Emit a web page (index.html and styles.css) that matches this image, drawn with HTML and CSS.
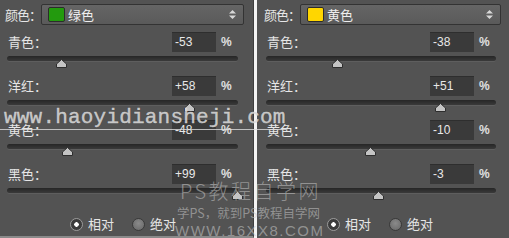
FILE: index.html
```html
<!DOCTYPE html>
<html lang="zh">
<head>
<meta charset="utf-8">
<link rel="stylesheet" href="styles.css">
</head>
<body>
<div class="wrap">
  <section class="panel panel-left">
    <div class="color-row">
      <span class="color-label">颜色：</span>
      <div class="select">
        <span class="swatch swatch-green"></span>
        <span class="select-text">绿色</span>
        <svg class="updown" width="7" height="9" viewBox="0 0 7 9"><path d="M3.5 0 L7 3.5 H0 Z M3.5 9 L7 5.5 H0 Z" fill="#d8d8d8"/></svg>
      </div>
    </div>
    <div class="group">
      <div class="head"><span class="lbl">青色：</span><span class="num">-53</span><span class="pct">%</span></div>
      <div class="track"><svg class="thumb" style="left:23.5%" width="11" height="9" viewBox="0 0 11 9"><path d="M0.5 8.5 V5 L5.5 0.5 L10.5 5 V8.5 Z" fill="#c4c4c4" stroke="#2e2e2e"/></svg></div>
    </div>
    <div class="group">
      <div class="head"><span class="lbl">洋红：</span><span class="num">+58</span><span class="pct">%</span></div>
      <div class="track"><svg class="thumb" style="left:79%" width="11" height="9" viewBox="0 0 11 9"><path d="M0.5 8.5 V5 L5.5 0.5 L10.5 5 V8.5 Z" fill="#c4c4c4" stroke="#2e2e2e"/></svg></div>
    </div>
    <div class="group">
      <div class="head"><span class="lbl">黄色：</span><span class="num">-48</span><span class="pct">%</span></div>
      <div class="track"><svg class="thumb" style="left:26%" width="11" height="9" viewBox="0 0 11 9"><path d="M0.5 8.5 V5 L5.5 0.5 L10.5 5 V8.5 Z" fill="#c4c4c4" stroke="#2e2e2e"/></svg></div>
    </div>
    <div class="group">
      <div class="head"><span class="lbl">黑色：</span><span class="num">+99</span><span class="pct">%</span></div>
      <div class="track"><svg class="thumb" style="left:99.5%" width="11" height="9" viewBox="0 0 11 9"><path d="M0.5 8.5 V5 L5.5 0.5 L10.5 5 V8.5 Z" fill="#c4c4c4" stroke="#2e2e2e"/></svg></div>
    </div>
    <div class="radios">
      <span class="radio radio-on"></span><span class="rtext">相对</span>
      <span class="radio radio-off"></span><span class="rtext">绝对</span>
    </div>
  </section>
  <div class="sep"></div>
  <section class="panel panel-right">
    <div class="color-row">
      <span class="color-label">颜色：</span>
      <div class="select">
        <span class="swatch swatch-yellow"></span>
        <span class="select-text">黄色</span>
        <svg class="updown" width="7" height="9" viewBox="0 0 7 9"><path d="M3.5 0 L7 3.5 H0 Z M3.5 9 L7 5.5 H0 Z" fill="#d8d8d8"/></svg>
      </div>
    </div>
    <div class="group">
      <div class="head"><span class="lbl">青色：</span><span class="num">-38</span><span class="pct">%</span></div>
      <div class="track"><svg class="thumb" style="left:31%" width="11" height="9" viewBox="0 0 11 9"><path d="M0.5 8.5 V5 L5.5 0.5 L10.5 5 V8.5 Z" fill="#c4c4c4" stroke="#2e2e2e"/></svg></div>
    </div>
    <div class="group">
      <div class="head"><span class="lbl">洋红：</span><span class="num">+51</span><span class="pct">%</span></div>
      <div class="track"><svg class="thumb" style="left:75.5%" width="11" height="9" viewBox="0 0 11 9"><path d="M0.5 8.5 V5 L5.5 0.5 L10.5 5 V8.5 Z" fill="#c4c4c4" stroke="#2e2e2e"/></svg></div>
    </div>
    <div class="group">
      <div class="head"><span class="lbl">黄色：</span><span class="num">-10</span><span class="pct">%</span></div>
      <div class="track"><svg class="thumb" style="left:45%" width="11" height="9" viewBox="0 0 11 9"><path d="M0.5 8.5 V5 L5.5 0.5 L10.5 5 V8.5 Z" fill="#c4c4c4" stroke="#2e2e2e"/></svg></div>
    </div>
    <div class="group">
      <div class="head"><span class="lbl">黑色：</span><span class="num">-3</span><span class="pct">%</span></div>
      <div class="track"><svg class="thumb" style="left:48.5%" width="11" height="9" viewBox="0 0 11 9"><path d="M0.5 8.5 V5 L5.5 0.5 L10.5 5 V8.5 Z" fill="#c4c4c4" stroke="#2e2e2e"/></svg></div>
    </div>
    <div class="radios">
      <span class="radio radio-on"></span><span class="rtext">相对</span>
      <span class="radio radio-off"></span><span class="rtext">绝对</span>
    </div>
  </section>

  <div class="wm wm-url">www.haoyidiansheji.com</div>
  <div class="wm-line"></div>
  <div class="wm wm-big">PS教程自学网</div>
  <div class="wm wm-sub">学PS，就到PS教程自学网</div>
  <div class="wm wm-www">WWW.16XX8.COM</div>
</div>
</body>
</html>
```

FILE: styles.css
```css
html, body {
  margin: 0;
  padding: 0;
  background: #535353;
}

.wrap {
  position: relative;
  display: flex;
  width: 509px;
  height: 238px;
  overflow: hidden;
  font-family: "Noto Sans CJK SC", "Liberation Sans", sans-serif;
  color: #e6e6e6;
}

.panel {
  background: #535353;
  padding-top: 4px;
  box-sizing: border-box;
  height: 238px;
}

.panel-left {
  width: 254px;
  border-right: 1px solid #3e3e3e;
  border-bottom: 2px solid #8a8a8a;
}

.panel-right {
  width: 251px;
}

.sep {
  width: 3px;
  background: #f4f4f4;
}

.color-row {
  display: flex;
  align-items: center;
  height: 21px;
}

.panel-left .color-row { padding-left: 5px; padding-right: 9px; }
.panel-right .color-row { padding-left: 7px; padding-right: 7px; }

.color-label {
  flex: none;
  width: 36px;
  white-space: nowrap;
  font-size: 13px;
  letter-spacing: -1px;
  line-height: 21px;
}

.select {
  flex: 1;
  height: 21px;
  box-sizing: border-box;
  border: 1px solid #333333;
  border-radius: 2px;
  background: linear-gradient(#656565, #5a5a5a);
  display: flex;
  align-items: center;
  padding-left: 6px;
  padding-right: 7px;
}

.swatch {
  width: 17px;
  height: 15px;
  box-sizing: border-box;
  border: 1px solid #2c2c2c;
  border-radius: 2px;
  margin-right: 3px;
}

.swatch-green { background: #239a0e; }
.swatch-yellow { background: #ffd600; }

.select-text {
  flex: 1;
  font-size: 13px;
  line-height: 19px;
  color: #eeeeee;
}

.updown { display: block; }

.group {
  height: 44px;
}

.color-row + .group { margin-top: 7px; }

.panel-left .group { padding-left: 7px; padding-right: 15px; }
.panel-right .group { padding-left: 9px; padding-right: 12px; }

.head {
  display: flex;
  align-items: center;
  height: 20px;
  margin-bottom: 4px;
}

.lbl {
  flex: 1;
  padding-left: 1px;
  white-space: nowrap;
  font-size: 13px;
  line-height: 20px;
}

.num {
  width: 44px;
  height: 20px;
  box-sizing: border-box;
  background: #3a3a3a;
  border-top: 1px solid #2e2e2e;
  padding-left: 3px;
  font-family: "Liberation Sans", sans-serif;
  font-size: 12px;
  line-height: 19px;
  color: #e8e8e8;
}

.pct {
  width: 12px;
  margin-left: 5px;
  margin-right: 5px;
  font-family: "Liberation Sans", sans-serif;
  font-size: 12px;
  font-weight: bold;
  color: #e0e0e0;
}

.track {
  position: relative;
  height: 5px;
  border-radius: 3px;
  background: linear-gradient(#262626, #3a3a3a);
  box-shadow: 0 1px 0 #5e5e5e;
}

.thumb {
  position: absolute;
  top: 3px;
  margin-left: -5px;
  display: block;
}

.radios {
  display: flex;
  align-items: center;
  padding-left: 70px;
  margin-top: 9px;
  height: 14px;
}

.radio {
  width: 13px;
  height: 13px;
  box-sizing: border-box;
  border-radius: 50%;
  margin-right: 5px;
}

.radio-on {
  border: 1px solid #9a9a9a;
  background: radial-gradient(circle, #ffffff 0 2px, #3c3c3c 2.5px);
}

.radio-off {
  border: 1px solid #3a3a3a;
  background: radial-gradient(circle at 50% 40%, #8a8a8a, #666666);
}

.rtext {
  font-size: 13px;
  line-height: 14px;
  margin-right: 18px;
}

.wm {
  position: absolute;
  z-index: 5;
  white-space: nowrap;
  pointer-events: none;
}

.wm-url {
  left: 4px;
  top: 106px;
  font-family: "Liberation Mono", monospace;
  font-size: 21px;
  letter-spacing: 0.2px;
  color: rgba(218, 218, 218, 0.85);
  -webkit-text-stroke: 0.4px rgba(218, 218, 218, 0.85);
}

.wm-line {
  position: absolute;
  z-index: 5;
  left: 0;
  top: 129px;
  width: 286px;
  height: 1px;
  background: rgba(220, 220, 220, 0.8);
}

.wm-big {
  left: 180px;
  top: 179px;
  font-size: 20px;
  line-height: 24px;
  font-weight: 300;
  letter-spacing: 2.5px;
  color: rgba(200, 200, 200, 0.55);
}

.wm-sub {
  left: 177px;
  top: 205px;
  font-size: 12.5px;
  line-height: 16px;
  color: rgba(200, 200, 200, 0.55);
}

.wm-www {
  left: 175px;
  top: 222px;
  font-family: "Liberation Sans", sans-serif;
  font-size: 15px;
  line-height: 17px;
  letter-spacing: 1.5px;
  color: rgba(200, 200, 200, 0.55);
}
```
